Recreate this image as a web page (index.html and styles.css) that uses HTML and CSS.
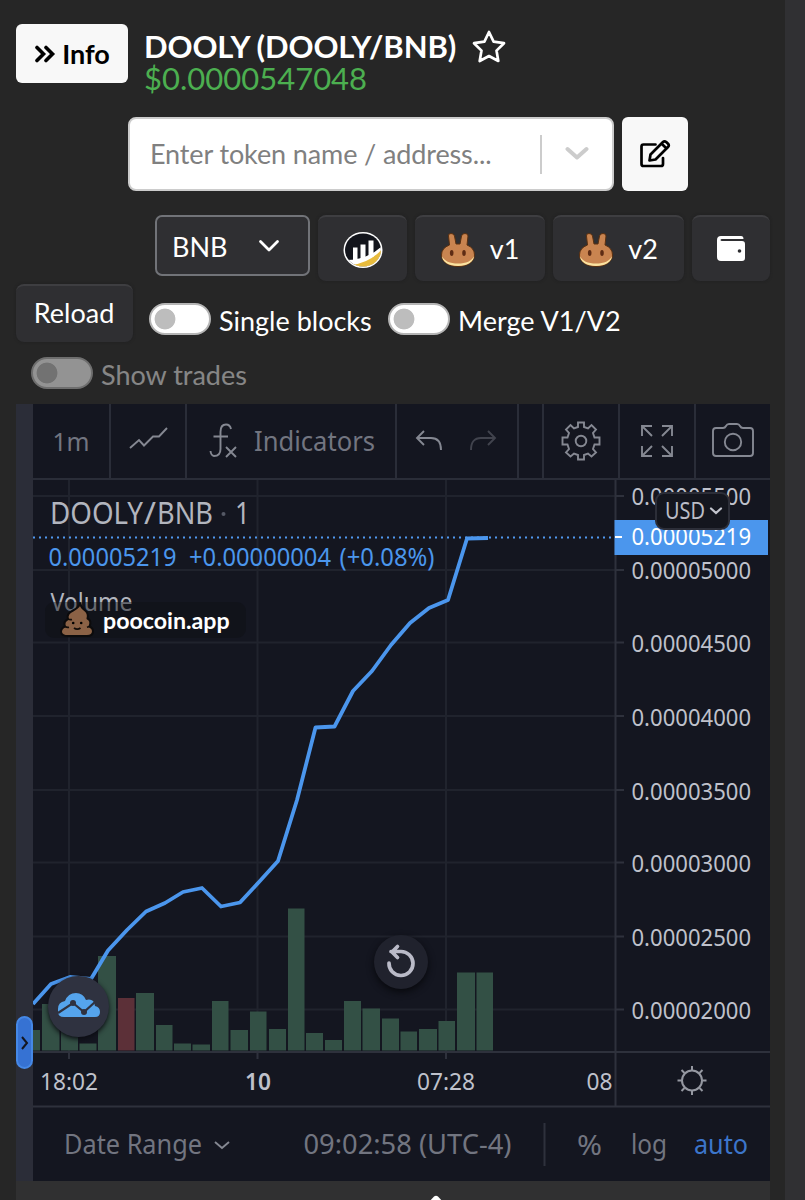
FILE: index.html
```html
<!DOCTYPE html>
<html lang="en">
<head>
<meta charset="utf-8">
<title>DOOLY/BNB chart</title>
<link rel="stylesheet" href="styles.css">
</head>
<body>
<svg width="0" height="0" class="defs">
  <symbol id="bunny" viewBox="0 0 34 34">
    <path d="M7.500 3Q7 .5 10 .5T13.500 3L15 11H19L20.500 3Q21 .5 24 .5T27 3L26 12Q33.500 15 33.500 22C33.500 29 26 33.500 17 33.500S.5 29 .5 22Q.5 15 8.500 12Z" fill="#c98450" stroke="#5a3010" stroke-width="1"/>
    <path d="M1 23C3 28 9 30.500 17 30.500S31 28 33 23C33 29 26 33 17 33S1 29 1 23Z" fill="#fbe3a0"/>
    <ellipse cx="10.700" cy="20" rx="1.800" ry="2.900" fill="#5e2c14"/><ellipse cx="23" cy="20" rx="1.800" ry="2.900" fill="#5e2c14"/>
  </symbol>
</svg>
<div class="page">
  <main class="main">
    <header class="head">
      <button class="btn light info"><svg width="22" height="18" viewBox="0 0 22 18"><path d="M3 2.500 9.500 9 3 15.500M12 2.500 18.500 9 12 15.500" fill="none" stroke="#000" stroke-width="3.600" stroke-linecap="round"/></svg><span>Info</span></button>
      <div class="titles">
        <div class="title"><span class="name">DOOLY (DOOLY/BNB)</span><svg width="34" height="33" viewBox="0 0 34 33"><path d="M17 2 21.600 11.600 32 13.200 24.500 20.600 26.300 31 17 26 7.700 31 9.500 20.600 2 13.200 12.400 11.600Z" fill="none" stroke="#fff" stroke-width="2.700" stroke-linejoin="round"/></svg></div>
        <div class="price">$0.0000547048</div>
      </div>
    </header>
    <div class="search">
      <div class="field"><span class="ph">Enter token name / address...</span><i class="bar"></i><svg width="24" height="16" viewBox="0 0 24 16"><path d="M2.500 3 12 11.500 21.500 3" fill="none" stroke="#ccc" stroke-width="4" stroke-linecap="round" stroke-linejoin="round"/></svg></div>
      <button class="btn light edit"><svg width="32" height="30" viewBox="0 0 32 30"><g fill="none" stroke="#000" stroke-width="2.700" stroke-linejoin="round" stroke-linecap="round"><path d="M16.500 5.500H4.500Q2.500 5.500 2.500 7.500V25Q2.500 27 4.500 27H22Q24 27 24 25V19"/><path d="M10.500 21.500 11.500 15.500 24 3Q25.500 1.500 27.500 3.200L29 4.700Q30.500 6.500 29 8L16.500 20.500ZM22.500 4.500 27.500 9.500"/></g></svg></button>
    </div>
    <div class="sources">
      <div class="select"><span>BNB</span><svg width="24" height="16" viewBox="0 0 24 16"><path d="M3.500 3.500 12 12 20.500 3.500" fill="none" stroke="#fff" stroke-width="2.800" stroke-linecap="round" stroke-linejoin="round"/></svg></div>
      <button class="btn dark logo"><svg width="40" height="38" viewBox="0 0 40 38"><defs><clipPath id="coin"><ellipse cx="20" cy="19" rx="18" ry="16.500"/></clipPath></defs><ellipse cx="20" cy="19" rx="19.500" ry="18" fill="#fff"/><g clip-path="url(#coin)"><path fill="#13151c" d="M0 0H40V38H0Z"/><path d="M0 29Q24 30 40 14V40H0Z" fill="#fff"/><path d="M8 34Q27 32 39 18V40H8Z" fill="#e8bb3c"/><path d="M10 16.500H14.500V31H10ZM17.500 13.500H22.500V30H17.500ZM25.500 9.500H30.500V26H25.500Z" fill="#fff"/></g></svg></button>
      <button class="btn dark v1"><svg width="34" height="34"><use href="#bunny"/></svg><span>v1</span></button>
      <button class="btn dark v2"><svg width="34" height="34"><use href="#bunny"/></svg><span>v2</span></button>
      <button class="btn dark wallet"><svg width="28" height="26" viewBox="0 0 28 26"><path d="M0 4Q0 0 4 0H24Q26.500 0 26.500 3H5Q3.500 3 3.500 4T5 5H25Q28 5 28 8V22Q28 25 25 25H4Q0 25 0 21Z" fill="#fff"/><circle cx="22.500" cy="15" r="1.800" fill="#2d2d30"/></svg></button>
    </div>
    <div class="options">
      <button class="btn dark reload">Reload</button>
      <i class="toggle"></i><span class="lbl single">Single blocks</span>
      <i class="toggle"></i><span class="lbl merge">Merge V1/V2</span>
    </div>
    <div class="trades"><i class="toggle"></i><span class="lbl">Show trades</span></div>

    <section class="chart">
      <aside class="drawer"><i class="handle"><svg width="10" height="18" viewBox="0 0 10 18"><path d="M2 3 7 9 2 15" fill="none" stroke="#14161f" stroke-width="2"/></svg></i></aside>
      <div class="panel">
        <nav class="tools">
          <div class="tool t1"><svg width="76" height="74" viewBox="33 404 76 74"><text x="52.500" y="451" font-size="26" textLength="37" lengthAdjust="spacingAndGlyphs">1m</text></svg></div>
          <div class="tool t2"><svg width="40" height="24" viewBox="0 0 40 24"><path d="M1 21 10 13 15 18.500 24 9.500H30L38 1" class="ico"/></svg></div>
          <div class="tool t3"><svg width="208" height="74" viewBox="187 404 208 74"><path class="ico" d="M231 429Q230 424.500 226 424.500Q220.500 424.500 220.500 432V449Q220.500 456 214 456Q211 455.500 210.500 451M213.500 436.500H228M226 447 236 457M236 447 226 457"/><text x="254" y="451" font-size="27" textLength="121" lengthAdjust="spacingAndGlyphs">Indicators</text></svg></div>
          <div class="tool t4"><svg width="27" height="22" viewBox="0 0 27 22"><path class="ico" d="M9 1 2 8 9 15M2 8H16Q26 8 26 20"/></svg><svg class="faint" width="27" height="22" viewBox="0 0 27 22"><path class="ico" d="M18 1 25 8 18 15M25 8H11Q1 8 1 20"/></svg></div>
          <div class="tool t5"></div>
          <div class="tool t6"><svg width="40" height="40" viewBox="-20 -20 40 40"><path class="ico" d="M-3-18.500H3V-14L7-12.500 10.500-16 15-11.500 12-8 13.500-3.500H18.500V3.500H13.500L12 8 15 11.500 10.500 15.500 7 12.500 3 14V18.500H-3V14L-7 12.500-10.500 15.500-15 11.500-12 8-13.500 3.500H-18.500V-3.500H-13.500L-12-8-15-11.500-10.500-16-7-12.500-3-14Z"/><circle class="ico" r="5.300"/></svg></div>
          <div class="tool t7"><svg width="34" height="34" viewBox="0 0 34 34"><path class="ico" d="M2 12V2H12M2 2 12 12M22 2H32V12M32 2 22 12M2 22V32H12M2 32 12 22M22 32H32V22M32 32 22 22"/></svg></div>
          <div class="tool t8"><svg width="42" height="36" viewBox="0 0 42 36"><path class="ico" d="M4 6H11Q13 6 14 4T17 2H25Q27 2 28 4T31 6H38Q41 6 41 9V31Q41 34 38 34H4Q1 34 1 31V9Q1 6 4 6Z"/><circle class="ico" cx="21" cy="20" r="8.200"/></svg></div>
        </nav>
        <div class="plot">
          <svg width="737" height="628" viewBox="33 480 737 628">
            <path d="M33 496H615M33 570H615M33 642.500H615M33 716H615M33 790H615M33 862.500H615M33 936.500H615M33 1009.500H615M69 480V1052M257.500 480V1052M446 480V1052" stroke="#20232d" stroke-width="2"/>
            <path d="M615.500 480V1106M33 1052H770M33 1106.500H770M615 496H624M615 570H624M615 642.500H624M615 716H624M615 790H624M615 862.500H624M615 936.500H624M615 1009.500H624M69 1052V1059M257.500 1052V1059M446 1052V1059" stroke="#2e313c" stroke-width="2"/>
            <path fill="#335045" d="M33 1030h7v20.500h-7zM42 1004h17.500v46.500H42zM61 1030h17v20.500H61zM79.500 1043.500h17v7h-17zM98 956h18v94.500H98zM136 993h18v57.500h-18zM156 1025h16.500v25.500H156zM174 1043.500h17v7h-17zM192.500 1044.500h17.500v6h-17.500zM212 1001h16.500v49.500H212zM230.500 1030h17.500v20.500h-17.500zM250 1011.500h16.500v39H250zM269 1029h17v21.500h-17zM288 908.500h16.500v142H288zM306 1033h17v17.500h-17zM325 1040h17v10.500h-17zM344 1001h17v49.500h-17zM362.500 1008.500h17.500v42h-17.500zM382 1018.500h17v32h-17zM400.500 1031.500H417v19h-16.500zM419 1029h18v21.500h-18zM438.500 1021H455v29.500h-16.500zM457 972.500h18v78h-18zM476.500 972.500H493v78h-16.500z"/>
            <path fill="#5c3038" d="M118 998h16.500v52.500H118z"/>
            <path d="M33 537.500H615" stroke="#5097ee" stroke-width="2" stroke-dasharray="2 4"/>
            <path d="M33 1004 51 984 70 977 91 979 108 950.500 127 930 146 911.500 165 903 183 892 202 888 221 906.500 240 902.500 259 882 278 861 297 800 315.500 727.500 334.500 726.500 353 691 372 671 391 645 410 623 429 608 448 600 467 538.500 488 538" fill="none" stroke="#4b96ed" stroke-width="3.800" stroke-linejoin="round"/>
            <rect x="614.500" y="520" width="153.500" height="35" fill="#4b96ed"/>
            <path d="M615 537H622" stroke="#fff" stroke-width="2"/>
            <g class="axis">
              <text x="631.500" y="505" textLength="119.500" lengthAdjust="spacingAndGlyphs">0.00005500</text>
              <text x="631.500" y="545" textLength="119.500" lengthAdjust="spacingAndGlyphs" class="white">0.00005219</text>
              <text x="631.500" y="579" textLength="119.500" lengthAdjust="spacingAndGlyphs">0.00005000</text>
              <text x="631.500" y="652" textLength="119.500" lengthAdjust="spacingAndGlyphs">0.00004500</text>
              <text x="631.500" y="726" textLength="119.500" lengthAdjust="spacingAndGlyphs">0.00004000</text>
              <text x="631.500" y="800" textLength="119.500" lengthAdjust="spacingAndGlyphs">0.00003500</text>
              <text x="631.500" y="872.400" textLength="119.500" lengthAdjust="spacingAndGlyphs">0.00003000</text>
              <text x="631.500" y="946.400" textLength="119.500" lengthAdjust="spacingAndGlyphs">0.00002500</text>
              <text x="631.500" y="1019.400" textLength="119.500" lengthAdjust="spacingAndGlyphs">0.00002000</text>
              <text x="40" y="1090" textLength="58" lengthAdjust="spacingAndGlyphs">18:02</text>
              <text x="245" y="1090" textLength="26" lengthAdjust="spacingAndGlyphs" font-weight="600">10</text>
              <text x="417" y="1090" textLength="58" lengthAdjust="spacingAndGlyphs">07:28</text>
              <text x="586.500" y="1090" textLength="26" lengthAdjust="spacingAndGlyphs">08</text>
            </g>
            <g class="legend">
              <text x="50" y="524" font-size="31" textLength="93" lengthAdjust="spacingAndGlyphs">DOOLY</text>
              <text x="144" y="524" font-size="31" textLength="12" lengthAdjust="spacingAndGlyphs">/</text>
              <text x="157" y="524" font-size="31" textLength="56" lengthAdjust="spacingAndGlyphs">BNB</text>
              <text x="235" y="524" font-size="31" textLength="15" lengthAdjust="spacingAndGlyphs">1</text>
              <circle cx="223.500" cy="514" r="2" fill="#555965"/>
              <text x="48.500" y="565.500" font-size="26" textLength="128" lengthAdjust="spacingAndGlyphs" class="blue">0.00005219</text>
              <text x="189" y="565.500" font-size="26" textLength="142" lengthAdjust="spacingAndGlyphs" class="blue">+0.00000004</text>
              <text x="339.500" y="565.500" font-size="26" textLength="95" lengthAdjust="spacingAndGlyphs" class="blue">(+0.08%)</text>
              <text x="50.500" y="611" font-size="25" textLength="82" lengthAdjust="spacingAndGlyphs">Volume</text>
            </g>
            <g fill="none" stroke="#9598a1" stroke-width="2"><circle cx="692" cy="1080.500" r="10"/><path d="M692 1070V1066M692 1091V1095M681.500 1080.500H677.500M702.500 1080.500H706.500M684.500 1073 681.500 1070M699.500 1073 702.500 1070M684.500 1088 681.500 1091M699.500 1088 702.500 1091"/></g>
          </svg>
          <div class="badge"><svg width="34" height="36" viewBox="0 0 34 36"><path d="M20 2Q20 6 13 9.500Q6 13 8 18Q3 20.500 5 25.500Q1 27 1 31Q1.500 35 8 35H27Q33 35 33 30Q33 27 29.500 25.500Q32 19.500 27.500 17.500Q29 12 24.500 9Q21 6.500 20 2Z" fill="#8b6246" stroke="#0c0b0c" stroke-width="2" stroke-linejoin="round"/><path d="M8 18Q10 19 12 18.500M5 25.500Q7 26.800 9 26.300M29.500 25.500 27 26.300" fill="none" stroke="#120d0a" stroke-width="1.700"/><circle cx="13.200" cy="22" r="1.300"/><circle cx="21.200" cy="22" r="1.300"/><path d="M14 27Q17.200 29.300 20.500 27" fill="none" stroke="#120c08" stroke-width="1.900"/></svg><span>poocoin.app</span></div>
          <div class="currency"><svg width="70" height="34" viewBox="0 0 70 34"><text x="8" y="24.500" font-size="24" textLength="40" lengthAdjust="spacingAndGlyphs">USD</text><path d="M54 14.500 59 19 64 14.500" fill="none" stroke="#c3c5ce" stroke-width="2.200" stroke-linecap="round"/></svg></div>
          <div class="reset"><svg width="54" height="54" viewBox="0 0 54 54"><path d="M15 28A12 12 0 1 0 26.500 16.500H17M23.500 11.500 18 17 23.500 22.500" fill="none" stroke="#babbc8" stroke-width="3.700" stroke-linecap="round" stroke-linejoin="round"/></svg></div>
          <div class="tv"><svg width="44" height="26" viewBox="0 0 44 26"><path d="M1 17Q1 10 8 9Q11 1 19 1Q26 1 29 8Q37 6 38 14Q43 15 43 20Q43 25 38 25H7Q1 25 1 20Z" fill="#55a4ec"/><path d="M1 21 16 11 27 20 38 10" fill="none" stroke="#2f3240" stroke-width="2.200"/><circle cx="16" cy="11" r="3" fill="#2f3240"/><circle cx="27" cy="20" r="3" fill="#2f3240"/></svg></div>
        </div>
        <footer class="foot">
          <svg width="737" height="73" viewBox="33 1108 737 73"><g fill="#727580" font-size="27"><text x="64" y="1154.400" textLength="138" lengthAdjust="spacingAndGlyphs">Date Range</text><text x="303.500" y="1154.400" textLength="208" lengthAdjust="spacingAndGlyphs">09:02:58 (UTC-4)</text><text x="577" y="1155" font-size="27" textLength="25" lengthAdjust="spacingAndGlyphs">%</text><text x="631" y="1154.400" textLength="36" lengthAdjust="spacingAndGlyphs">log</text><text x="694" y="1154.400" textLength="54" lengthAdjust="spacingAndGlyphs" fill="#3c75ca">auto</text></g><path d="M215 1142 222 1148 229 1142" class="ico"/><path d="M544.500 1123V1166" stroke="#2e313c" stroke-width="2"/></svg>
        </footer>
      </div>
    </section>
    <div class="below"><svg width="20" height="8" viewBox="0 0 20 8"><path d="M2 8 8 1.500Q10 0 12 1.500L18 8Z" fill="#fff"/></svg></div>
  </main>
  <div class="gutter"></div>
</div>
</body>
</html>
```
FILE: styles.css
```css
* { box-sizing: border-box; }
body { margin: 0; background: #262626; color: #fff; font-family: Lato, sans-serif; font-size: 27px; overflow: hidden; }
.defs { position: absolute; }
svg { display: block; flex: none; }
i { display: block; flex: none; }
.page { display: flex; height: 1200px; }
.main { width: 785px; padding: 24px 15px 0 16px; display: flex; flex-direction: column; }
.gutter { width: 20px; background: #303033; }
.btn { border: 0; font: inherit; color: inherit; padding: 0; display: flex; align-items: center; justify-content: center; border-radius: 6px; flex: none; white-space: nowrap; }
.light { background: #f8f8f8; color: #000; }
.dark { background: #2f2f32; border-top: 2px solid #3e3e41; border-radius: 8px; box-shadow: 0 0 3px #1f1f20; }
.head { display: flex; height: 93px; }
.info { width: 112px; height: 59px; gap: 6px; font-weight: 700; font-size: 27px; padding: 0; }
.info span { padding-bottom: 1px; }
.titles { margin-left: 16px; padding-top: 6px; }
.title { display: flex; gap: 17px; align-items: center; height: 32px; line-height: 32px; font-weight: 700; font-size: 31px; letter-spacing: -.1px; white-space: nowrap; }
.name { width: 311px; }
.price { height: 32px; line-height: 32px; color: #4caf50; font-size: 31px; }
.search { display: flex; gap: 8px; margin-left: 112px; height: 74px; }
.field { width: 486px; background: #fff; border: 2px solid #ccc; border-radius: 8px; display: flex; align-items: center; padding: 0 22px 0 20px; color: #808080; white-space: nowrap; }
.ph { width: 390px; padding-bottom: 2px; letter-spacing: -.12px; flex: none; }
.bar { width: 2px; height: 39px; background: #ccc; margin-right: 23px; }
.edit { width: 66px; height: 74px; }
.sources { display: flex; gap: 8px; margin: 24px 0 0 139px; height: 69px; }
.select { width: 155px; height: 61px; border: 2px solid #717378; border-radius: 7px; background: #2f2f32; display: flex; align-items: center; padding: 1px 27px 0 15px; justify-content: space-between; }
.sources .btn { height: 66px; padding-top: 2px; }
.sources .btn span { padding-bottom: 3px; }
.logo { width: 89px; }
.v1 { width: 130px; gap: 15px; }
.v2 { width: 131px; gap: 15px; }
.sources .wallet { width: 78px; padding-top: 0; }
.options { display: flex; height: 73px; }
.reload { width: 117px; height: 58px; margin-right: 16px; padding: 0 1px 3px 0; }
.toggle { width: 62px; height: 32px; border-radius: 16px; border: 2px solid #b5b5b5; background: radial-gradient(circle at 14px 14px, #bdbdbd 10px, #fff 10.800px); }
.options .toggle { margin-top: 19px; }
.lbl { margin-left: 8px; white-space: nowrap; line-height: 34px; }
.options .lbl { margin-top: 20px; }
.single { width: 169px; }
.trades { display: flex; height: 47px; padding-left: 15px; opacity: .5; }
.trades .lbl { margin-top: 1px; color: #e5e5e5; }
.chart { display: flex; height: 777px; width: 754px; font-family: "Noto Sans", sans-serif; }
.drawer { width: 17px; background: #2b2d38; padding-top: 612px; }
.handle { width: 17px; height: 53px; border: 2px solid #4588e6; border-radius: 9px; background: #3672d3; display: flex; align-items: center; justify-content: center; }
.panel { width: 737px; background: #141620; }
.tools { display: flex; height: 76px; border-bottom: 2px solid #2a2d38; }
.tools text { fill: #727580; }
.tool { border-right: 2px solid #2a2d38; display: flex; align-items: center; justify-content: center; flex: none; }
.ico { fill: none; stroke: #858892; stroke-width: 1.900; }
.t1 { width: 78px; }
.t2 { width: 76px; padding: 0 0 4px 2px; }
.t3 { width: 210px; }
.t4 { width: 122px; gap: 28px; padding-right: 3px; }
.t5 { width: 25px; }
.t6 { width: 76px; }
.t7 { width: 76px; }
.t8 { width: 74px; border: 0; padding: 0 1px 2px 0; }
.faint { opacity: .4; }
.plot { position: relative; height: 628px; }
.axis { font-size: 24px; fill: #bfc1cb; }
.axis .white { fill: #fff; }
.legend { fill: #b2b5be; }
.legend .blue { fill: #4b96ed; }
.badge { position: absolute; left: 12px; top: 122px; width: 201px; height: 36px; border-radius: 9px; background: rgba(14, 15, 20, .45); display: flex; align-items: center; padding-left: 15px; gap: 9px; font: 700 23.200px Lato, sans-serif; white-space: nowrap; }
.badge svg { margin-top: -2px; }
.currency { position: absolute; left: 622px; top: 12px; width: 75px; height: 38px; background: #14161e; border: 2px solid #2c2e38; border-radius: 9px; }
.currency text { fill: #babdc7; }
.reset { position: absolute; left: 341px; top: 455px; border-radius: 50%; background: #20222d; box-shadow: 0 3px 7px #08090d; }
.tv { position: absolute; left: 15px; top: 496px; width: 61px; height: 61px; border-radius: 50%; background: #2f3240; box-shadow: 0 2px 5px #0b0c12; display: flex; align-items: center; justify-content: center; }
.tv svg { margin-top: -3px; }
.foot { height: 73px; }
.below { height: 19px; width: 754px; background: #303031; padding: 14px 0 0 410px; overflow: hidden; }
```
